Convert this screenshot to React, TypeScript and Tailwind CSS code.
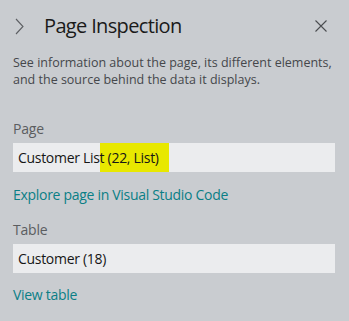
import React from "react"

const Field = ({ label, children }: { label: string; children: React.ReactNode }) => (
    <div className="flex flex-col">
        <div className="text-[14px] leading-[20px] text-[#5b5d60] tracking-[-0.2px]">{label}</div>
        <div className="mt-[4px] h-[29px] w-[322px] bg-[#ebecee] flex items-center pl-[5px] text-[14px] text-[#161616] tracking-[-0.3px]">
            {children}
        </div>
    </div>
)

export default function App() {
    return (
        <div
            className="w-[349px] h-[321px] bg-[#c9ccd0] overflow-hidden"
            style={{ fontFamily: '"Open Sans", "Noto Sans", sans-serif' }}
        >
            {/* Header */}
            <div className="flex items-center h-[52px] pl-[15px] pr-[22px]">
                <svg width="9" height="17" viewBox="0 0 9 17" className="text-[#5d5f63]">
                    <path d="M1 1 L8 8.5 L1 16" fill="none" stroke="currentColor" strokeWidth="1.1" />
                </svg>
                <h1 className="ml-[20px] text-[20px] text-[#1a1a1a] tracking-[-0.65px]">Page Inspection</h1>
                <button className="ml-auto">
                    <svg width="12" height="12" viewBox="0 0 12 12" className="text-[#4a4c50]">
                        <path d="M0.5 0.5 L11.5 11.5 M11.5 0.5 L0.5 11.5" stroke="currentColor" strokeWidth="1.1" />
                    </svg>
                </button>
            </div>

            {/* Description */}
            <p className="px-[13px] mt-[2px] text-[12.5px] leading-[17px] text-[#45474b]">
                See information about the page, its different elements, and the source behind the data it displays.
            </p>

            <div className="px-[13px] mt-[31px] flex flex-col">
                <Field label="Page">
                    <span>
                        Customer Lis
                        <span className="bg-[#e8e800] inline-block h-[29px] leading-[29px] pr-[10px]">t (22, List)</span>
                    </span>
                </Field>
                <a className="mt-[13px] text-[14px] leading-[20px] text-[#0a7f86] tracking-[-0.3px]">Explore page in Visual Studio Code</a>

                <div className="mt-[15px]">
                    <Field label="Table">Customer (18)</Field>
                </div>
                <a className="mt-[12px] text-[14px] leading-[20px] text-[#0a7f86] tracking-[-0.3px]">View table</a>
            </div>
        </div>
    )
}
